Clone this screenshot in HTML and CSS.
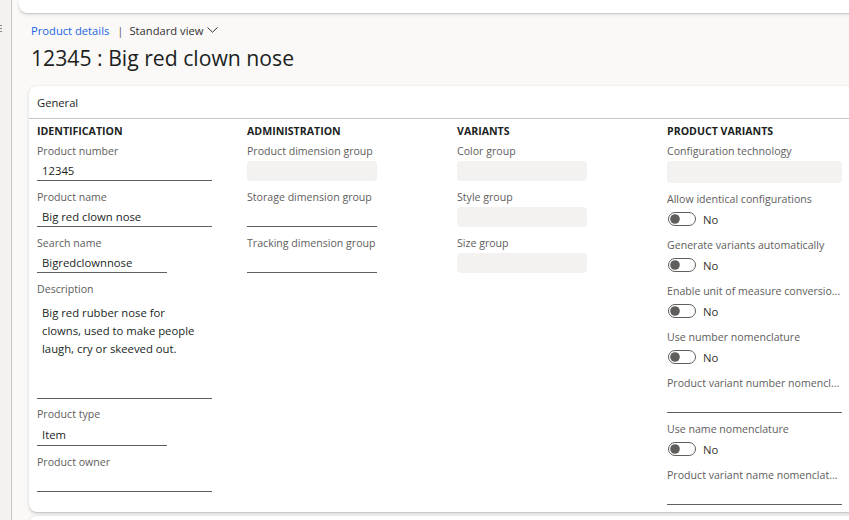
FILE: index.html
```html
<!DOCTYPE html>
<html lang="en">
<head>
<meta charset="utf-8">
<title>Product details</title>
<link rel="stylesheet" href="styles.css">
</head>
<body>
<div class="app">
  <aside class="rail"><span class="rail-dots"><i></i><i></i><i></i></span></aside>
  <main class="main">
    <div class="topbar"></div>
    <nav class="crumbs">
      <a class="crumb-link" href="#">Product details</a>
      <span class="sep">|</span>
      <span class="view">Standard view
        <svg class="chev" width="11" height="6" viewBox="0 0 11 6"><path d="M0.5 0.5 L5.5 5.2 L10.5 0.5" fill="none" stroke="#323130" stroke-width="1"/></svg>
      </span>
    </nav>
    <h1 class="title">12345 : Big red clown nose</h1>

    <section class="card">
      <div class="card-head">General</div>
      <div class="card-body">
        <div class="col">
          <h3 class="group-title">IDENTIFICATION</h3>
          <div class="field"><div class="label">Product number</div><div class="input w-lg">12345</div></div>
          <div class="field"><div class="label">Product name</div><div class="input w-lg">Big red clown nose</div></div>
          <div class="field"><div class="label">Search name</div><div class="input w-sm">Bigredclownnose</div></div>
          <div class="field desc"><div class="label">Description</div><div class="textarea">Big red rubber nose for<br>clowns, used to make people<br>laugh, cry or skeeved out.</div></div>
          <div class="field"><div class="label">Product type</div><div class="input w-sm combo">Item</div></div>
          <div class="field"><div class="label">Product owner</div><div class="input w-lg"></div></div>
        </div>
        <div class="col">
          <h3 class="group-title">ADMINISTRATION</h3>
          <div class="field"><div class="label">Product dimension group</div><div class="readonly"></div></div>
          <div class="field"><div class="label">Storage dimension group</div><div class="input w-sm"></div></div>
          <div class="field"><div class="label">Tracking dimension group</div><div class="input w-sm"></div></div>
        </div>
        <div class="col">
          <h3 class="group-title">VARIANTS</h3>
          <div class="field"><div class="label">Color group</div><div class="readonly"></div></div>
          <div class="field"><div class="label">Style group</div><div class="readonly"></div></div>
          <div class="field"><div class="label">Size group</div><div class="readonly"></div></div>
        </div>
        <div class="col">
          <h3 class="group-title">PRODUCT VARIANTS</h3>
          <div class="field"><div class="label">Configuration technology</div><div class="readonly tall"></div></div>
          <div class="field"><div class="label">Allow identical configurations</div>
            <div class="toggle"><svg width="28" height="14" viewBox="0 0 28 14"><rect x="0.5" y="0.5" width="27" height="13" rx="6.5" fill="#fff" stroke="#605e5c"/><circle cx="7" cy="7" r="4.8" fill="#605e5c"/></svg><span>No</span></div></div>
          <div class="field"><div class="label">Generate variants automatically</div>
            <div class="toggle"><svg width="28" height="14" viewBox="0 0 28 14"><rect x="0.5" y="0.5" width="27" height="13" rx="6.5" fill="#fff" stroke="#605e5c"/><circle cx="7" cy="7" r="4.8" fill="#605e5c"/></svg><span>No</span></div></div>
          <div class="field"><div class="label">Enable unit of measure conversio...</div>
            <div class="toggle"><svg width="28" height="14" viewBox="0 0 28 14"><rect x="0.5" y="0.5" width="27" height="13" rx="6.5" fill="#fff" stroke="#605e5c"/><circle cx="7" cy="7" r="4.8" fill="#605e5c"/></svg><span>No</span></div></div>
          <div class="field"><div class="label">Use number nomenclature</div>
            <div class="toggle"><svg width="28" height="14" viewBox="0 0 28 14"><rect x="0.5" y="0.5" width="27" height="13" rx="6.5" fill="#fff" stroke="#605e5c"/><circle cx="7" cy="7" r="4.8" fill="#605e5c"/></svg><span>No</span></div></div>
          <div class="field"><div class="label">Product variant number nomencl...</div><div class="input w-lg"></div></div>
          <div class="field"><div class="label">Use name nomenclature</div>
            <div class="toggle"><svg width="28" height="14" viewBox="0 0 28 14"><rect x="0.5" y="0.5" width="27" height="13" rx="6.5" fill="#fff" stroke="#605e5c"/><circle cx="7" cy="7" r="4.8" fill="#605e5c"/></svg><span>No</span></div></div>
          <div class="field"><div class="label">Product variant name nomenclat...</div><div class="input w-lg"></div></div>
        </div>
      </div>
    </section>
    <section class="card next"></section>
  </main>
</div>
</body>
</html>
```
FILE: styles.css
```css
html, body {
  margin: 0;
  padding: 0;
}
body {
  font-family: "Segoe UI", "Open Sans", sans-serif;
  background: #faf9f8;
  color: #201f1e;
  overflow: hidden;
}
.app {
  display: flex;
  height: 520px;
  overflow: hidden;
}
.rail {
  width: 11px;
  flex: none;
  background: #f3f2f1;
  border-right: 1px solid #c8c6c4;
  padding-top: 25px;
}
.rail-dots {
  display: flex;
  flex-direction: column;
  gap: 2px;
  width: 2px;
}
.rail-dots i {
  display: block;
  width: 2px;
  height: 1px;
  background: #8a8886;
}
.main {
  flex: 1;
  min-width: 0;
}
.topbar {
  height: 13px;
  margin: 0 -20px 0 7px;
  background: #fff;
  border-radius: 0 0 0 8px;
  box-shadow: 0 1.6px 3.6px rgba(0, 0, 0, 0.13), 0 0.3px 0.9px rgba(0, 0, 0, 0.11);
}
.crumbs {
  display: flex;
  align-items: center;
  height: 20px;
  margin: 7px 0 0 19px;
  font-size: 11.2px;
}
.crumb-link {
  color: #2266e3;
  text-decoration: none;
}
.sep {
  color: #605e5c;
  margin: 0 6px 0 8px;
}
.view {
  display: flex;
  align-items: center;
  gap: 4px;
  color: #323130;
}
.chev {
  margin-top: -1px;
}
.title {
  margin: 4px 0 0 19px;
  font-size: 21.2px;
  font-weight: 500;
  line-height: 28px;
  color: #201f1e;
}
.card {
  margin: 14px -20px 0 17px;
  background: #fff;
  border-radius: 8px 0 0 8px;
  box-shadow: 0 1.6px 3.6px rgba(0, 0, 0, 0.13), 0 0.3px 0.9px rgba(0, 0, 0, 0.11);
}
.card.next {
  margin-top: 4px;
  height: 30px;
}
.card-head {
  height: 32px;
  padding-left: 8px;
  display: flex;
  align-items: center;
  border-bottom: 1px solid #c8c6c4;
  font-size: 11.2px;
  color: #201f1e;
}
.card-body {
  display: grid;
  grid-template-columns: repeat(4, 210px);
  padding: 2px 0 7px 8px;
}
.group-title {
  margin: 0;
  font-size: 10.6px;
  font-weight: 700;
  line-height: 20px;
  color: #201f1e;
}
.field {
  margin-bottom: 6px;
}
.field:last-child {
  margin-bottom: 0;
}
.field.desc {
  margin-bottom: 5px;
}
.label {
  font-size: 10.6px;
  line-height: 20px;
  color: #605e5c;
  white-space: nowrap;
}
.input {
  box-sizing: border-box;
  height: 20px;
  padding-left: 5px;
  border-bottom: 1px solid #605e5c;
  font-size: 11.3px;
  line-height: 19px;
  color: #201f1e;
  white-space: nowrap;
}
.input.combo {
  height: 22px;
  line-height: 21px;
}
.w-lg {
  width: 175px;
}
.w-sm {
  width: 130px;
}
.textarea {
  box-sizing: border-box;
  width: 175px;
  height: 100px;
  padding: 5px 5px 0;
  border-bottom: 1px solid #605e5c;
  font-size: 11.3px;
  line-height: 18px;
  color: #201f1e;
}
.readonly {
  width: 130px;
  height: 20px;
  background: #f3f2f1;
  border-radius: 4px;
}
.readonly.tall {
  width: 175px;
  height: 22px;
}
.toggle {
  display: flex;
  align-items: center;
  gap: 7px;
  height: 20px;
  padding-left: 1px;
  font-size: 11.3px;
  color: #323130;
}
.toggle svg {
  display: block;
}
```
